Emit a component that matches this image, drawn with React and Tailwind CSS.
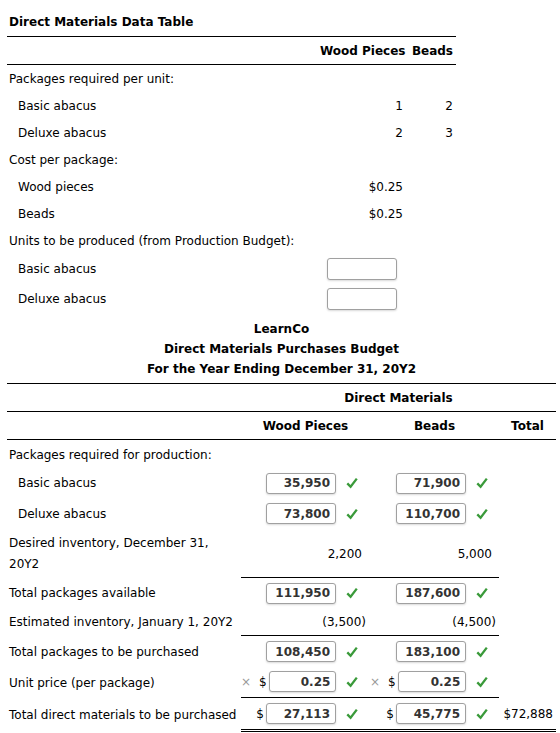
import React from "react";

const Check = () => (
  <svg width="12" height="12" viewBox="0 0 12 12" className="shrink-0">
    <path d="M1.3 6.4 L4.6 9.8 L10.8 1.6" fill="none" stroke="#3a9a3a" strokeWidth="2.3" strokeLinecap="butt" strokeLinejoin="miter" />
  </svg>
);

const Box = ({ v, w = "w-[70px]", h = "h-[21px]" }) => (
  <div className={`${w} ${h} border border-[#a0a0a0] rounded-[3px] bg-white shadow-[0_1px_2px_rgba(0,0,0,0.15)] flex items-center justify-end pr-[5px] font-bold text-[#333]`}>
    {v}
  </div>
);

const InCell = ({ v, prefix, border = "", pr = "pr-[12px]" }) => (
  <div className={`flex items-center justify-end ${pr} ${border}`}>
    {prefix}
    <Box v={v} />
    <div className="w-[10px]" />
    <Check />
  </div>
);

const Prefix = ({ x }) => (
  <div className="flex items-center mr-[2px]">
    {x && <span className="text-[#999] mr-[8px]">×</span>}
    <span>$</span>
  </div>
);

export default function App() {
  const font = { fontFamily: '"DejaVu Sans", Verdana, sans-serif' };
  const g2 = "grid grid-cols-[234px_129px_129px_57px]";
  const g1 = "grid grid-cols-[313px_86px_50px]";
  return (
    <div className="bg-white w-[560px] h-[733px] overflow-hidden text-[12px] text-black" style={font}>
      <div className="pl-[7px]">
        <div className="h-[36px] pt-[12px] leading-[20px] pl-[2px] font-bold">Direct Materials Data Table</div>
        <div className="w-[449px]">
          <div className={`${g1} h-[29px] border-y border-black font-bold items-center whitespace-nowrap`}>
            <div></div>
            <div className="text-right pr-[3px]">Wood Pieces</div>
            <div className="text-right pr-[3px]">Beads</div>
          </div>
          {[
            ["Packages required per unit:", "", "", 0],
            ["Basic abacus", "1", "2", 1],
            ["Deluxe abacus", "2", "3", 1],
            ["Cost per package:", "", "", 0],
            ["Wood pieces", "$0.25", "", 1],
            ["Beads", "$0.25", "", 1],
            ["Units to be produced (from Production Budget):", "", "", 0],
          ].map(([l, a, b, ind], i) => (
            <div key={i} className={`${g1} h-[27px] items-center`}>
              <div className={`${ind ? "pl-[11px]" : "pl-[2px]"} whitespace-nowrap`}>{l}</div>
              <div className="text-right pr-[3px]">{a}</div>
              <div className="text-right pr-[3px]">{b}</div>
            </div>
          ))}
          {["Basic abacus", "Deluxe abacus"].map((l, i) => (
            <div key={l} className={`${g1} ${i === 0 ? "h-[29px]" : "h-[31px]"} items-center`}>
              <div className="pl-[11px]">{l}</div>
              <div className="flex justify-end pr-[9px]">
                <div className="w-[70px] h-[22px] border border-[#a0a0a0] rounded-[3px] bg-white shadow-[0_1px_2px_rgba(0,0,0,0.15)]" />
              </div>
              <div></div>
            </div>
          ))}
        </div>

        <div className="w-[549px] pt-[5px] font-bold text-center leading-[20px]">
          <div>LearnCo</div>
          <div>Direct Materials Purchases Budget</div>
          <div>For the Year Ending December 31, 20Y2</div>
        </div>
        <div className="w-[549px] mt-[4px]">
          <div className={`${g2} h-[29px] border-y border-black font-bold items-center`}>
            <div></div>
            <div className="col-span-3 text-center">Direct Materials</div>
          </div>
          <div className={`${g2} h-[28px] border-b border-black font-bold items-center pt-[1px]`}>
            <div></div>
            <div className="text-center">Wood Pieces</div>
            <div className="text-center">Beads</div>
            <div className="text-center">Total</div>
          </div>
          <div className={`${g2} h-[28px] items-center pt-[1px]`}>
            <div className="pl-[2px]">Packages required for production:</div>
          </div>
          <div className={`${g2} h-[30px] items-center`}>
            <div className="pl-[11px]">Basic abacus</div>
            <InCell v="35,950" />
            <InCell v="71,900" pr="pr-[11px]" />
          </div>
          <div className={`${g2} h-[31px] items-center`}>
            <div className="pl-[11px]">Deluxe abacus</div>
            <InCell v="73,800" />
            <InCell v="110,700" pr="pr-[11px]" />
          </div>
          <div className={`${g2} h-[49px]`}>
            <div className="pl-[2px] leading-[21px] pt-[4px] pr-[20px]">Desired inventory, December 31, 20Y2</div>
            <div className="border-b border-black flex items-center justify-end pr-[8px] pt-[1px]">2,200</div>
            <div className="border-b border-black flex items-center justify-end pr-[7px] pt-[1px]">5,000</div>
          </div>
          <div className={`${g2} h-[29px] items-center pt-[1px]`}>
            <div className="pl-[2px]">Total packages available</div>
            <InCell v="111,950" />
            <InCell v="187,600" pr="pr-[11px]" />
          </div>
          <div className={`${g2} h-[29px]`}>
            <div className="pl-[2px] flex items-center pt-[1px]">Estimated inventory, January 1, 20Y2</div>
            <div className="border-b border-black flex items-center justify-end pr-[4px] pt-[1px]">(3,500)</div>
            <div className="border-b border-black flex items-center justify-end pr-[3px] pt-[1px]">(4,500)</div>
          </div>
          <div className={`${g2} h-[30px] items-center pt-[1px]`}>
            <div className="pl-[2px]">Total packages to be purchased</div>
            <InCell v="108,450" />
            <InCell v="183,100" pr="pr-[11px]" />
          </div>
          <div className={`${g2} h-[32px]`}>
            <div className="pl-[2px] flex items-center pt-[1px]">Unit price (per package)</div>
            <InCell v="0.25" prefix={<Prefix x />} border="border-b border-black" />
            <InCell v="0.25" prefix={<Prefix x />} border="border-b border-black" pr="pr-[11px]" />
          </div>
          <div className={`${g2} h-[34px]`}>
            <div className="pl-[2px] flex items-center whitespace-nowrap">Total direct materials to be purchased</div>
            <InCell v="27,113" prefix={<Prefix />} border="border-b-[3px] border-double border-black" />
            <InCell v="45,775" prefix={<Prefix />} border="border-b-[3px] border-double border-black" pr="pr-[11px]" />
            <div className="border-b-[3px] border-double border-black flex items-center justify-end pr-[3px]">$72,888</div>
          </div>
        </div>
      </div>
    </div>
  );
}
